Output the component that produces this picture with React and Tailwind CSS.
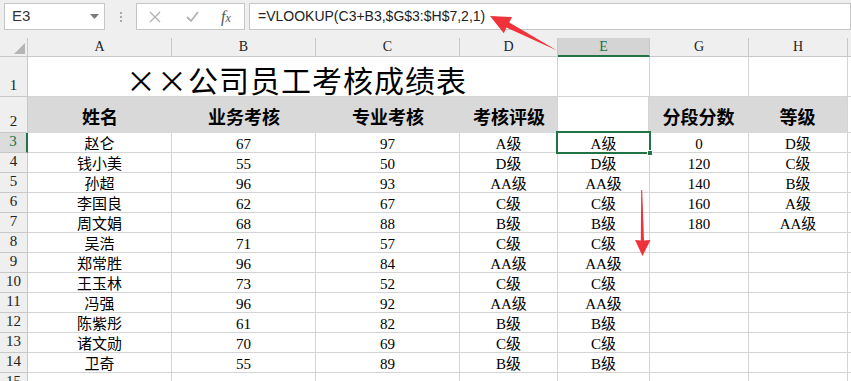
import React from "react";

const W = [28, 144, 144, 144, 98, 92, 99, 99];
const serif = { fontFamily: '"Liberation Serif", "Noto Sans CJK SC", serif' };

const data = [
  ["赵仑", "67", "97", "A级", "A级", "0", "D级"],
  ["钱小美", "55", "50", "D级", "D级", "120", "C级"],
  ["孙超", "96", "93", "AA级", "AA级", "140", "B级"],
  ["李国良", "62", "67", "C级", "C级", "160", "A级"],
  ["周文娟", "68", "88", "B级", "B级", "180", "AA级"],
  ["吴浩", "71", "57", "C级", "C级", "", ""],
  ["郑常胜", "96", "84", "AA级", "AA级", "", ""],
  ["王玉林", "73", "52", "C级", "C级", "", ""],
  ["冯强", "96", "92", "AA级", "AA级", "", ""],
  ["陈紫彤", "61", "82", "B级", "B级", "", ""],
  ["诸文勋", "70", "69", "C级", "C级", "", ""],
  ["卫奇", "55", "89", "B级", "B级", "", ""],
];

function RowHead({ n, h, selected }) {
  return (
    <div
      className={`shrink-0 flex items-end justify-center border-b border-[#c8c8c8] text-[15px] leading-none pb-[3px] ${
        selected
          ? "bg-[#dcdcdc] text-[#217346] border-r-2 border-r-[#217346]"
          : "bg-[#efefef] text-[#222] border-r border-r-[#c8c8c8]"
      }`}
      style={{ width: W[0], height: h, ...serif }}
    >
      {n}
    </div>
  );
}

function Cell({ w, children, className = "" }) {
  return (
    <div
      className={`shrink-0 flex items-center justify-center border-r border-b border-[#d4d4d4] text-[15px] leading-none text-black pt-[3px] ${className}`}
      style={{ width: w, ...serif }}
    >
      {children}
    </div>
  );
}

export default function App() {
  const cols = ["A", "B", "C", "D", "E", "G", "H"];
  return (
    <div className="relative w-[851px] h-[381px] overflow-hidden bg-white">
      {/* toolbar */}
      <div className="h-[38px] bg-[#efefef] flex items-start pt-[3px] pl-[4px]">
        <div className="w-[101px] h-[27px] bg-white border border-[#c6c6c6] flex items-center justify-between pl-[7px] pr-[5px]">
          <span className="text-[15px] text-[#333]" style={{ fontFamily: '"Liberation Sans", sans-serif' }}>
            E3
          </span>
          <svg width="9" height="5" viewBox="0 0 9 5">
            <path d="M0 0 H9 L4.5 5 Z" fill="#7a7a7a" />
          </svg>
        </div>
        <div className="w-[31px] h-[27px] flex flex-col items-center justify-center gap-[2px]">
          <span className="w-[2px] h-[2px] bg-[#a8a8a8]" />
          <span className="w-[2px] h-[2px] bg-[#a8a8a8]" />
          <span className="w-[2px] h-[2px] bg-[#a8a8a8]" />
        </div>
        <div className="w-[109px] h-[27px] bg-white border border-[#c6c6c6] flex items-center">
          <svg className="ml-[12px]" width="12" height="12" viewBox="0 0 12 12">
            <path d="M1 1 L11 11 M11 1 L1 11" stroke="#b3b3b3" strokeWidth="1.4" />
          </svg>
          <svg className="ml-[25px]" width="13" height="11" viewBox="0 0 13 11">
            <path d="M1 6 L5 10 L12 1" stroke="#b3b3b3" strokeWidth="1.8" fill="none" />
          </svg>
          <span
            className="ml-[22px] text-[16px] italic text-[#555]"
            style={{ fontFamily: '"Liberation Serif", serif' }}
          >
            f<span className="text-[12px]">x</span>
          </span>
        </div>
        <div className="ml-[4px] flex-1 h-[27px] bg-white border border-[#c6c6c6] flex items-center pl-[8px]">
          <span className="text-[14px] text-[#222]" style={{ fontFamily: '"Liberation Sans", sans-serif' }}>
            =VLOOKUP(C3+B3,$G$3:$H$7,2,1)
          </span>
        </div>
      </div>

      {/* column headers */}
      <div className="flex h-[19px]">
        <div
          className="relative shrink-0 bg-[#efefef] border-r border-b border-[#c8c8c8]"
          style={{ width: W[0] }}
        >
          <svg className="absolute right-[2px] bottom-[2px]" width="11" height="11" viewBox="0 0 11 11">
            <path d="M11 0 V11 H0 Z" fill="#b5b5b5" />
          </svg>
        </div>
        {cols.map((c, i) => (
          <div
            key={c}
            className={`shrink-0 flex items-center justify-center border-r border-r-[#c8c8c8] text-[14px] leading-none ${
              c === "E"
                ? "bg-[#d4d4d4] text-[#217346] border-b-2 border-b-[#217346]"
                : "bg-[#efefef] text-[#222] border-b border-b-[#c8c8c8]"
            }`}
            style={{ width: W[i + 1], ...serif }}
          >
            {c}
          </div>
        ))}
        <div className="flex-1 bg-[#efefef] border-b border-[#c8c8c8]" />
      </div>

      {/* row 1 */}
      <div className="flex h-[40px]">
        <RowHead n="1" h={40} />
        <div
          className="shrink-0 border-r border-b border-[#d4d4d4] flex items-center pl-[98px] pt-[4px] text-[30px] leading-none text-black tracking-[1px]"
          style={{ width: W[1] + W[2] + W[3] + W[4], fontFamily: '"Noto Sans CJK SC", sans-serif' }}
        >
          ××公司员工考核成绩表
        </div>
        <Cell w={W[5]} />
        <Cell w={W[6]} />
        <Cell w={W[7]} />
        <div className="flex-1 border-b border-[#d4d4d4]" />
      </div>

      {/* row 2 */}
      <div className="flex h-[36px]">
        <RowHead n="2" h={36} />
        {["姓名", "业务考核", "专业考核", "考核评级"].map((t, i) => (
          <div
            key={t}
            className="shrink-0 bg-[#d9d9d9] flex items-center justify-center pt-[2px] text-[18px] font-bold leading-none text-black"
            style={{ width: W[i + 1], fontFamily: '"Noto Sans CJK SC", sans-serif' }}
          >
            {t}
          </div>
        ))}
        <Cell w={W[5]} className="border-l border-l-[#d4d4d4] -ml-px" />
        {["分段分数", "等级"].map((t, i) => (
          <div
            key={t}
            className="shrink-0 bg-[#d9d9d9] flex items-center justify-center pt-[2px] text-[18px] font-bold leading-none text-black"
            style={{ width: W[i + 6], fontFamily: '"Noto Sans CJK SC", sans-serif' }}
          >
            {t}
          </div>
        ))}
        <div className="flex-1 border-l border-b border-[#d4d4d4]" />
      </div>

      {/* data rows */}
      {data.map((r, ri) => (
        <div key={ri} className="flex h-[20px]">
          <RowHead n={String(ri + 3)} h={20} selected={ri === 0} />
          {r.map((v, ci) => (
            <Cell key={ci} w={W[ci + 1]} className={ci === 4 && ri === 0 ? "relative" : ""}>
              {v}
              {ci === 4 && ri === 0 && (
                <>
                  <div className="absolute -left-[2px] -top-[2px] right-[-2px] bottom-[-2px] border-2 border-[#217346]" />
                  <div className="absolute right-[-4px] bottom-[-4px] w-[6px] h-[6px] bg-[#217346] border border-white" />
                </>
              )}
            </Cell>
          ))}
          <div className="flex-1 border-b border-[#d4d4d4]" />
        </div>
      ))}

      {/* row 15 */}
      <div className="flex h-[20px]">
        <RowHead n="15" h={20} />
        {[1, 2, 3, 4, 5, 6, 7].map((i) => (
          <Cell key={i} w={W[i]} />
        ))}
        <div className="flex-1" />
      </div>

      {/* annotation arrows */}
      <svg className="absolute left-0 top-0 pointer-events-none" width="851" height="381" viewBox="0 0 851 381">
        <polygon
          points="490,16 512,17 509.3,22.6 557,50.5 506.5,27.6 503.8,33.2"
          fill="#f0323a"
        />
        <polygon
          points="641.2,190 642.2,190 644,240.5 650.5,240 642.5,256 635,240 640.8,240.5"
          fill="#f0323a"
        />
      </svg>
    </div>
  );
}
